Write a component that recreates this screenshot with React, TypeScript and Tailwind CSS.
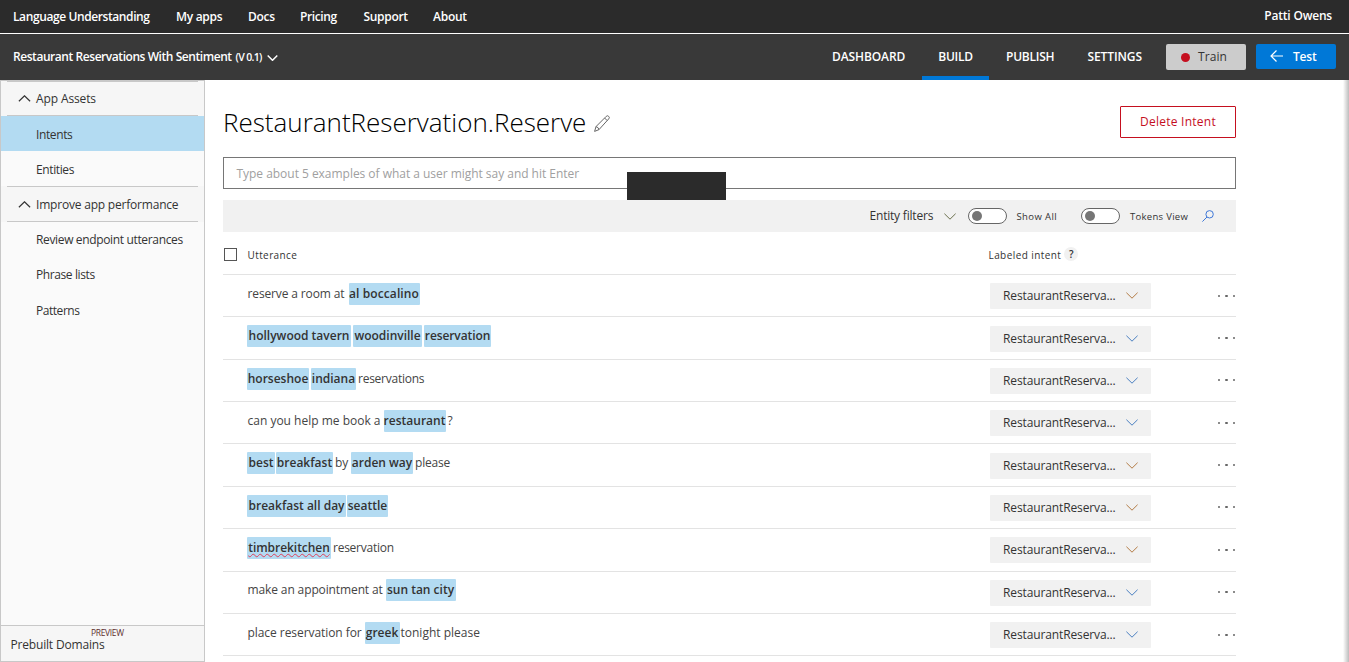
import React from "react";

type Segment = { text: string; tag?: boolean; typo?: boolean; cls: string };

const rows: Segment[][] = [
  [
    { text: "reserve a room at", cls: "w-[101.5px] tracking-[-0.13px]" },
    { text: "al boccalino", tag: true, cls: "w-[71px] tracking-[0.1px]" },
  ],
  [
    { text: "hollywood tavern", tag: true, cls: "w-[104px] mr-[2px]" },
    { text: "woodinville", tag: true, cls: "w-[69px] mr-[2px]" },
    { text: "reservation", tag: true, cls: "w-[67px] tracking-[-0.1px]" },
  ],
  [
    { text: "horseshoe", tag: true, cls: "w-[62px] mr-[2px]" },
    { text: "indiana", tag: true, cls: "w-[45px] mr-[2px]" },
    { text: "reservations", cls: "tracking-[-0.25px]" },
  ],
  [
    { text: "can you help me book a", cls: "w-[136.5px]" },
    { text: "restaurant", tag: true, cls: "w-[62px] mr-[2px]" },
    { text: "?", cls: "" },
  ],
  [
    { text: "best", tag: true, cls: "w-[28px] mr-px" },
    { text: "breakfast", tag: true, cls: "w-[57px] mr-[2px]" },
    { text: "by", cls: "w-[16px] tracking-[-0.2px]" },
    { text: "arden way", tag: true, cls: "w-[62px] mr-[2px]" },
    { text: "please", cls: "tracking-[-0.2px]" },
  ],
  [
    { text: "breakfast all day", tag: true, cls: "w-[99px] mr-px" },
    { text: "seattle", tag: true, cls: "w-[41px]" },
  ],
  [
    { text: "timbrekitchen", tag: true, typo: true, cls: "w-[84px] mr-[2px] tracking-[-0.05px]" },
    { text: "reservation", cls: "tracking-[-0.25px]" },
  ],
  [
    { text: "make an appointment at", cls: "w-[138.5px] tracking-[-0.12px]" },
    { text: "sun tan city", tag: true, cls: "w-[70px]" },
  ],
  [
    { text: "place reservation for", cls: "w-[117.5px] tracking-[-0.06px]" },
    { text: "greek", tag: true, cls: "w-[35px] mr-[1px]" },
    { text: "tonight please", cls: "" },
  ],
];

function Chevron({ className, up = false, width = 1 }: { className: string; up?: boolean; width?: number }) {
  return (
    <svg viewBox="0 0 12 7" className={className} fill="none" stroke="currentColor" strokeWidth={width}>
      <path d={up ? "M0.4 6.3 6 0.8l5.6 5.5" : "M0.4 0.7 6 6.2l5.6-5.5"} />
    </svg>
  );
}

function TopBar() {
  return (
    <header className="flex h-[33px] items-center bg-[#2b2b2b] pr-[17px] pl-[13px] text-[12px] font-semibold whitespace-nowrap text-white">
      <span className="w-[163px] tracking-[-0.4px]">Language Understanding</span>
      <span className="w-[72px] tracking-[-0.3px]">My apps</span>
      <span className="w-[52px] tracking-[-0.3px]">Docs</span>
      <span className="w-[63px] tracking-[-0.4px]">Pricing</span>
      <span className="w-[70px] pl-[0.5px] tracking-[-0.3px]">Support</span>
      <span className="tracking-[-0.25px]">About</span>
      <span className="mb-[2px] ml-auto tracking-[-0.2px]">Patti Owens</span>
    </header>
  );
}

function AppBar() {
  return (
    <div className="flex h-[46px] bg-[#393939] pr-[13px] pl-[13px] text-[12px] font-semibold text-white">
      <div className="flex h-[46px] items-center whitespace-nowrap">
        <span className="w-[222.5px] tracking-[-0.44px]">Restaurant Reservations With Sentiment</span>
        <span className="w-[31.5px] pt-px text-[10.5px] tracking-[-0.65px]">(V 0.1)</span>
        <Chevron className="mt-[2px] h-[6px] w-[11px]" width={1.7} />
      </div>
      <nav className="ml-auto flex h-full leading-[46px]">
        <span className="w-[90px] tracking-[-0.1px]">DASHBOARD</span>
        <span className="w-[67px] border-b-4 border-[#0078d7] text-center tracking-[-0.3px]">BUILD</span>
        <span className="w-[98px] pl-[17px] tracking-[-0.25px]">PUBLISH</span>
        <span className="w-[79px] pl-[0.5px] tracking-[-0.1px]">SETTINGS</span>
      </nav>
      <button className="mt-[10px] flex h-[26px] w-[80px] items-center rounded-[2px] bg-[#cccccc] pl-[15px] font-normal text-[#333]">
        <span className="mr-[8px] h-[9px] w-[9px] rounded-full bg-[#c50f1f]" />
        <span className="tracking-[0.1px]">Train</span>
      </button>
      <button className="mt-[10px] ml-[10px] flex h-[25px] w-[80px] items-center rounded-[2px] bg-[#0078d7] pl-[14px]">
        <svg viewBox="0 0 13 12" className="mr-[10px] mb-px h-[12px] w-[13px]" fill="none" stroke="white" strokeWidth="1.2">
          <path d="M13 6H1M6.5 0.5 1 6l5.5 5.5" />
        </svg>
        <span className="tracking-[-0.2px]">Test</span>
      </button>
    </div>
  );
}

function Sidebar() {
  return (
    <aside className="flex w-[205px] shrink-0 flex-col border border-[#c8c8c8] bg-[#fafafa] text-[12px] whitespace-nowrap text-[#333]">
      <div className="h-[35px] bg-[#f6f6f6] px-[6px]">
        <div className="flex h-[35px] items-center border-y border-[#c8c8c8] pl-[11px] font-medium">
          <Chevron up className="mr-[5px] h-[7px] w-[13px]" width={1.2} />
          <span className="tracking-[-0.12px]">App Assets</span>
        </div>
      </div>
      <div className="flex h-[35px] items-center bg-[#b3dbf2] pt-[2px] pl-[35px] tracking-[-0.38px]">Intents</div>
      <div className="flex h-[35px] items-center pt-[2px] pl-[35px] tracking-[-0.38px]">Entities</div>
      <div className="h-[36px] bg-[#f6f6f6] px-[6px]">
        <div className="flex h-[36px] items-center border-y border-[#c8c8c8] pl-[11px] font-medium">
          <Chevron up className="mr-[5px] h-[7px] w-[13px]" width={1.2} />
          <span className="pt-[2px] tracking-[-0.2px]">Improve app performance</span>
        </div>
      </div>
      <div className="flex h-[35px] items-center pl-[35px] tracking-[-0.35px]">Review endpoint utterances</div>
      <div className="flex h-[35px] items-center pl-[35px] tracking-[-0.4px]">Phrase lists</div>
      <div className="flex h-[36px] items-center pt-[2px] pl-[35px] tracking-[-0.46px]">Patterns</div>
      <div className="mt-auto h-[36px] border-t border-[#c8c8c8] bg-[#f6f6f6] font-medium">
        <div className="pt-[2px] pl-[90px] text-[8.5px] leading-[10px] tracking-[-0.35px] text-[#5c2d2d]">PREVIEW</div>
        <div className="pl-[9.5px] leading-[14px] tracking-[-0.18px]">Prebuilt Domains</div>
      </div>
    </aside>
  );
}

function Toggle() {
  return (
    <span className="flex h-[16px] w-[39px] items-center rounded-full border border-[#666] bg-white pl-[3px]">
      <span className="h-[10px] w-[10px] rounded-full bg-[#767676]" />
    </span>
  );
}

function Utterance({ segments, index }: { segments: Segment[]; index: number }) {
  return (
    <div className="flex h-[42.375px] border-b border-[#e3e3e3] text-[12px]">
      <div className="flex w-[767px] pt-[7.8px] pl-[24px] leading-[22px]">
        {segments.map((s, i) =>
          s.tag ? (
            <span
              key={i}
              className={`h-[22px] shrink-0 rounded-[1px] bg-[#b3dbf2] text-center font-semibold whitespace-nowrap text-[#333] ${s.cls}`}
            >
              {s.typo ? (
                <span className="underline decoration-[#e0405a] decoration-wavy decoration-[0.5px] underline-offset-1">{s.text}</span>
              ) : (
                s.text
              )}
            </span>
          ) : (
            <span key={i} className={`shrink-0 whitespace-nowrap text-[#444] ${i === 0 ? "pl-[0.5px]" : ""} ${s.cls}`}>
              {s.text}
            </span>
          )
        )}
      </div>
      <div className="mt-[8.2px] flex h-[26px] w-[161px] items-center rounded-[1px] bg-[#f1f1f1] pl-[13px] text-[#333]">
        <span className="w-[123px] tracking-[-0.12px]">RestaurantReserva...</span>
        <Chevron
          className={`mb-px h-[7px] w-[12px] ${index === 0 || (index > 3 && index < 7) ? "text-[#b27b45]" : "text-[#4a7fc0]"}`}
        />
      </div>
      <div className="mt-[19.6px] ml-auto flex gap-[5px] pr-px">
        <span className="h-[2px] w-[2.5px] rounded-full bg-[#666]" />
        <span className="h-[2px] w-[2.5px] rounded-full bg-[#666]" />
        <span className="h-[2px] w-[2.5px] rounded-full bg-[#666]" />
      </div>
    </div>
  );
}

export default function App() {
  return (
    <div className="flex h-[662px] w-[1349px] flex-col overflow-hidden bg-white font-['Open_Sans','Noto_Sans',sans-serif]">
      <TopBar />
      <div className="h-px shrink-0 bg-white" />
      <AppBar />
      <div className="flex min-h-0 flex-1">
        <Sidebar />
        <main className="ml-[18px] w-[1013px]">
          <div className="flex h-[77px] items-center pt-[7px]">
            <h1 className="w-[371px] text-[26px] leading-[34px] font-light whitespace-nowrap text-black">
              RestaurantReservation.Reserve
            </h1>
            <svg viewBox="0 0 16 17" className="mt-[3px] h-[17px] w-[16px]" fill="none" stroke="#666" strokeWidth="1">
              <path d="M0.6 16.4 2 11.6 12.2 1.4a1.7 1.7 0 0 1 2.5 0 1.7 1.7 0 0 1 0 2.5L5 14.6zM2 11.6A4 4 0 0 1 5 14.6M10.6 3l2.6 2.6" />
            </svg>
            <button className="ml-auto h-[32px] w-[116px] rounded-[1px] border border-[#c50f1f] text-[12px] font-medium tracking-[0.25px] text-[#c50f1f]">
              Delete Intent
            </button>
          </div>
          <div className="relative h-[32px] border border-[#767676] pl-[12.5px] text-[12px] leading-[32px] tracking-[-0.03px] text-[#a0a0a0]">
            Type about 5 examples of what a user might say and hit Enter
            <div className="absolute top-[14px] left-[403px] h-[28px] w-[99px] bg-[#2b2b2b]" />
          </div>
          <div className="mt-[11px] flex h-[32px] items-center bg-[#f1f1f1] text-[12px] text-[#333]">
            <span className="ml-[646px] w-[75px] pl-[0.5px] tracking-[-0.2px]">Entity filters</span>
            <Chevron className="h-[7px] w-[12px] text-[#6b704d]" />
            <span className="ml-[12px] flex w-[48px]"><Toggle /></span>
            <span className="w-[65px] pt-[2px] pl-[0.5px] text-[9.5px] tracking-[0.4px]">Show All</span>
            <Toggle />
            <span className="ml-[10px] w-[72px] pt-[2px] text-[9.5px] tracking-[0.3px]">Tokens View</span>
            <svg viewBox="0 0 12 12" className="h-[12px] w-[12px]" fill="none" stroke="#3f78d8" strokeWidth="1">
              <circle cx="7.6" cy="4.3" r="3.7" />
              <path d="M5 7 0.4 11.6" />
            </svg>
          </div>
          <div className="flex h-[42.97px] items-center border-b border-[#e3e3e3] pt-[3px] text-[10px] font-medium text-[#333]">
            <span className="ml-[1px] h-[13px] w-[13px] border border-[#555]" />
            <span className="mt-[2px] ml-[10px] w-[741px] pl-[0.5px] tracking-[0.4px]">Utterance</span>
            <span className="mt-[2px] pl-[0.5px] tracking-[0.42px]">Labeled intent</span>
            <span className="mb-px ml-[3px] h-[14px] w-[14px] rounded-full bg-[#f1f1f1] text-center text-[10px] leading-[14px] font-semibold">?</span>
          </div>
          {rows.map((segments, i) => (
            <Utterance key={i} segments={segments} index={i} />
          ))}
        </main>
        <div className="ml-auto w-[6px] bg-linear-to-r from-white to-[#bdbdbd]" />
      </div>
    </div>
  );
}
